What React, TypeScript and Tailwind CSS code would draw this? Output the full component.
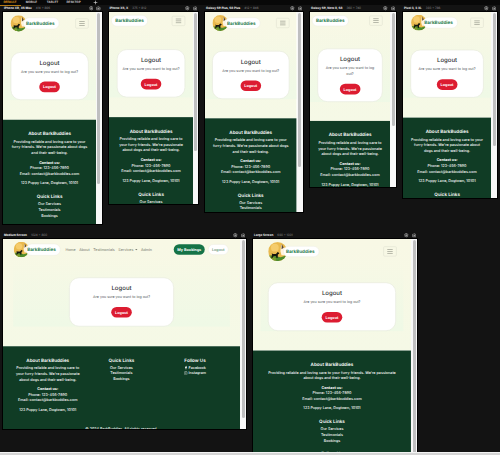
import { Camera, Settings, Plus } from "lucide-react";
import { FaFacebookF, FaInstagram } from "react-icons/fa";

type Device = {
  name: string;
  size: string;
  frame: string;
  view: string;
  page: string;
  thumb: string;
  header: string;
  logo?: string;
  pill: string;
  gap: string;
  card: string;
  main: string;
  message: string[];
  about: string[];
  wide?: boolean;
};

const ONE_LINE = ["Are you sure you want to log out?"];
const ABOUT_A = ["Providing reliable and loving care to your", "furry friends. We're passionate about dogs", "and their well-being."];
const ABOUT_B = ["Providing reliable and loving care to", "your furry friends. We're passionate", "about dogs and their well-being."];

const phones: Device[] = [
  {
    name: "iPhone XR, XS Max", size: "414 x 896",
    frame: "w-[98.5px] h-[212px]", view: "w-[93px]", page: "w-[393px]", thumb: "h-[171px]",
    header: "h-[96px] pl-[32px] pr-[31px]", logo: "size-[68px]", pill: "h-[50px] -ml-[14px] pl-[9px] pr-[18px]",
    gap: "pt-[73px]", card: "w-[330px] h-[203px]", main: "h-[359px]", message: ONE_LINE, about: ABOUT_A,
  },
  {
    name: "iPhone XS, X", size: "375 x 812",
    frame: "w-[89.5px] h-[192px]", view: "w-[84px]", page: "w-[355px]", thumb: "h-[138px]",
    header: "h-[74px] pl-[9px] pr-[33px]", pill: "h-[48px] px-[15px]",
    gap: "pt-[83px]", card: "w-[289px] h-[204px]", main: "h-[370px]", message: ONE_LINE, about: ABOUT_B,
  },
  {
    name: "Galaxy S9 Plus, S8 Plus", size: "412 x 846",
    frame: "w-[98px] h-[200px]", view: "w-[91.5px]", page: "w-[386px]", thumb: "h-[154px]",
    header: "h-[93px] pl-[31px] pr-[29px]", logo: "size-[67px]", pill: "h-[48px] -ml-[14px] pl-[7px] pr-[18px]",
    gap: "pt-[71px]", card: "w-[327px] h-[204px]", main: "h-[356px]", message: ONE_LINE, about: ABOUT_A,
  },
  {
    name: "Galaxy S9, Note 8, S8", size: "360 x 740",
    frame: "w-[86px] h-[175px]", view: "w-[80px]", page: "w-[338px]", thumb: "h-[113px]",
    header: "h-[73px] pl-[8px] pr-[31px]", pill: "h-[46px] px-[15px]",
    gap: "pt-[81px]", card: "w-[276px] h-[226px]", main: "h-[387px]", message: ["Are you sure you want to log", "out?"], about: ABOUT_B,
  },
  {
    name: "Pixel 3, 3 XL", size: "393 x 786",
    frame: "w-[94px] h-[186px]", view: "w-[88px]", page: "w-[372px]", thumb: "h-[133px]",
    header: "h-[90px] pl-[34px] pr-[31px]", logo: "size-[66px]", pill: "h-[48px] -ml-[15px] pl-[3px] pr-[18px]",
    gap: "pt-[69px]", card: "w-[310px] h-[203px]", main: "h-[356px]", message: ONE_LINE,
    about: ["Providing reliable and loving care to your", "furry friends. We're passionate about", "dogs and their well-being."],
  },
];

const screens: Device[] = [
  {
    name: "Medium Screen", size: "1024 x 800",
    frame: "w-[243px] h-[189.5px]", view: "w-[237px]", page: "w-[1001px]", thumb: "h-[178px]",
    header: "h-[89px] pl-[45px] pr-[49px]", logo: "size-[65px]", pill: "h-[50px] -ml-[14px] pl-[4px] pr-[18px]",
    gap: "pt-[73px]", card: "w-[443px] h-[208px]", main: "h-[364px] px-[43px]", message: ONE_LINE, about: ABOUT_B, wide: true,
  },
  {
    name: "Large Screen", size: "690 x 1001",
    frame: "w-[164px] h-[240px]", view: "w-[158px]", page: "w-[667px]", thumb: "h-[238px]",
    header: "h-[105px] pl-[64px] pr-[60px]", logo: "size-[80px]", pill: "h-[46px] -ml-[16px] pl-[9px] pr-[18px]",
    gap: "pt-[78px]", card: "w-[541px] h-[206px]", main: "h-[366px] px-[32px]", message: ONE_LINE,
    about: ["Providing reliable and loving care to your furry friends. We're passionate", "about dogs and their well-being."],
  },
];

function Logo({ className }: { className: string }) {
  return (
    <svg viewBox="0 0 68 68" className={`shrink-0 ${className}`}>
      <defs>
        <clipPath id="disc"><circle cx="34" cy="34" r="34" /></clipPath>
      </defs>
      <g clipPath="url(#disc)">
        <rect width="68" height="68" fill="#e9b94e" />
        <circle cx="24" cy="20" r="14" fill="#f5cc6c" />
        <path d="M0 50q18-6 34 2t34-8v26H0z" fill="#4d8b2c" />
        <path d="M0 52q16-3 28 6l-2 12H0z" fill="#7d9b2e" />
        <path d="M47 8l5 10 16 5v24H48l-4-14z" fill="#fff3dd" />
        <path d="M49 7l7 13-8 6z" fill="#57452d" />
        <path d="M13 40l4 3h11l6-7 6 3-1 3-4 3-1 12h-4l-2-7h-8l-5 7h-4l3-10z" fill="#16170f" />
      </g>
    </svg>
  );
}

function Header({ d }: { d: Device }) {
  return (
    <header className={`flex items-center justify-between ${d.header}`}>
      <div className="flex items-center">
        {d.logo && <Logo className={d.logo} />}
        <div className={`relative flex items-center rounded-full border-2 border-[#ecece2] bg-white text-[19.4px] font-bold text-[#1f7a4b] ${d.pill}`}>
          BarkBuddies
        </div>
        {d.wide && (
          <nav className="ml-[21px] flex gap-[15px] text-[15.5px] text-[#74776c]">
            <span>Home</span>
            <span>About</span>
            <span>Testimonials</span>
            <span className="flex items-center gap-[7px]">
              Services
              <i className="border-x-[5px] border-t-[5px] border-x-transparent border-t-[#74776c]" />
            </span>
            <span>Admin</span>
          </nav>
        )}
      </div>
      {d.wide ? (
        <div className="flex gap-[14px] text-[16px]">
          <span className="flex h-[45px] w-[131px] items-center justify-center rounded-full bg-[#157347] font-bold text-white">My Bookings</span>
          <span className="flex h-[45px] w-[86px] items-center justify-center rounded-full border-2 border-[#ecece2] bg-white font-medium text-[#4c8767]">Logout</span>
        </div>
      ) : (
        <div className="flex h-[43px] w-[57px] flex-col items-center justify-center gap-[5px] rounded-[6px] border-3 border-[#e4e5d5]">
          <i className="h-[3px] w-[23px] bg-[#9d9f92]" />
          <i className="h-[3px] w-[23px] bg-[#9d9f92]" />
          <i className="h-[3px] w-[23px] bg-[#9d9f92]" />
        </div>
      )}
    </header>
  );
}

function LogoutCard({ d }: { d: Device }) {
  return (
    <main className={d.main}>
      <div className={`bg-linear-to-b from-[#f8f8e500] to-[#eff9e6] ${d.gap}`}>
        <section className={`mx-auto flex flex-col items-center rounded-[42px] border-3 border-[#e8ebdf] bg-white pt-[26px] ${d.card}`}>
          <h1 className="text-[25.5px] leading-[34px] font-medium text-[#303337]">Logout</h1>
          <div className="mt-[8px] text-center text-[15.2px] leading-[24px] text-[#51565a]">
            {d.message.map((line) => <p key={line}>{line}</p>)}
          </div>
          <div className="mt-[30px] flex h-[45px] w-[87px] shrink-0 items-center justify-center rounded-full bg-[#dc1c31] text-[16px] font-bold text-white">Logout</div>
        </section>
      </div>
    </main>
  );
}

function About({ lines }: { lines: string[] }) {
  return (
    <div className="text-center">
      <h2 className="mb-[10px] text-[19.4px] leading-[24px] font-semibold">About BarkBuddies</h2>
      {lines.map((line) => <p key={line}>{line}</p>)}
      <p className="mt-[16px] font-bold">Contact us:</p>
      <p>Phone: 123-456-7890</p>
      <p>Email: contact@barkbuddies.com</p>
      <p className="mt-[16px]">123 Puppy Lane, Dogtown, 10101</p>
    </div>
  );
}

function QuickLinks() {
  return (
    <div className="text-center">
      <h2 className="mb-[8px] text-[19.4px] leading-[24px] font-semibold">Quick Links</h2>
      <p>Our Services</p>
      <p>Testimonials</p>
      <p>Bookings</p>
    </div>
  );
}

function FollowUs() {
  return (
    <div className="flex flex-col items-center">
      <h2 className="mb-[8px] text-[19.4px] leading-[24px] font-semibold">Follow Us</h2>
      <p className="flex items-center gap-[3px]"><FaFacebookF />Facebook</p>
      <p className="flex items-center gap-[3px]"><FaInstagram />Instagram</p>
    </div>
  );
}

function Footer({ d }: { d: Device }) {
  return (
    <footer className="min-h-[700px] bg-[#103c25] pt-[46px] text-[15.6px] leading-[24px] font-medium text-white">
      {d.wide ? (
        <>
          <div className="grid grid-cols-[310px_312px_310px] pl-[34px]">
            <About lines={d.about} />
            <QuickLinks />
            <FollowUs />
          </div>
          <p className="mt-[55px] text-center">© 2024 BarkBuddies. All rights reserved.</p>
        </>
      ) : (
        <div className="flex flex-col gap-[32px]">
          <About lines={d.about} />
          <QuickLinks />
          <FollowUs />
        </div>
      )}
    </footer>
  );
}

function Preview({ d }: { d: Device }) {
  return (
    <div className="shrink-0">
      <div className="flex h-[7px] items-center gap-[4px] pr-[1px] pl-[1px] text-[3px] leading-[7px] whitespace-nowrap">
        <b className="text-[#f0f0f0]">{d.name}</b>
        <span className="text-[#8d8d8d]">{d.size}</span>
        <Settings className="ml-auto size-[4.5px] text-[#bbb]" strokeWidth={3} />
        <Camera className="-ml-[1px] size-[4.5px] text-[#bbb]" strokeWidth={3} />
      </div>
      <div className={`flex overflow-hidden bg-white outline-1 outline-black ${d.frame}`}>
        <div className={`h-full shrink-0 overflow-hidden ${d.view}`}>
          <div className={`origin-top-left scale-[0.2368] whitespace-nowrap ${d.page}`}>
            <div className="bg-linear-to-b from-[#f8f8e5] to-[#f5f9e6]">
              <Header d={d} />
              <LogoutCard d={d} />
            </div>
            <Footer d={d} />
          </div>
        </div>
        <div className="flex h-full flex-1 justify-center bg-[#f8f8f8] pt-[1px]">
          <div className={`w-[3px] rounded-full bg-[#bfbfc0] ${d.thumb}`} />
        </div>
      </div>
    </div>
  );
}

export default function App() {
  return (
    <div className="flex h-[455px] w-[500px] flex-col overflow-hidden bg-[#131313] font-['Inter','Liberation_Sans',sans-serif] [text-rendering:geometricPrecision]">
      <nav className="flex h-[5px] shrink-0 items-center bg-[#080808] text-[3px] leading-[5px] font-semibold text-[#d8d8d8]">
        <span className="flex h-[6px] w-[21px] shrink-0 justify-center border-b border-[#b57a13] pr-[1px] text-[#f0a81e]">DEFAULT</span>
        <span className="w-[21px] text-center">MOBILE</span>
        <span className="w-[21px] text-center">TABLET</span>
        <span className="w-[21px] text-center">DESKTOP</span>
        <Plus className="ml-[9px] size-[5px]" strokeWidth={3} />
      </nav>
      <div className="flex h-[227px] shrink-0 items-start gap-[7px] pl-[3px]">
        {phones.map((d) => <Preview key={d.name} d={d} />)}
      </div>
      <div className="flex h-[220px] shrink-0 items-start gap-[7px] overflow-hidden pl-[3px]">
        {screens.map((d) => <Preview key={d.name} d={d} />)}
      </div>
      <div className="h-[3px] shrink-0 border-t border-[#f2f2f2] bg-[#d5d5d5]" />
    </div>
  );
}
